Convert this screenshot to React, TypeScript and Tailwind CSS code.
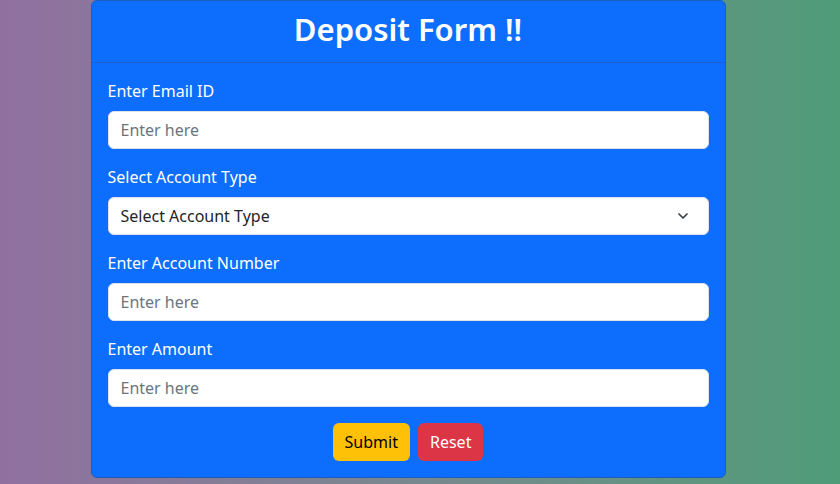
import { ChevronDown } from 'lucide-react';

const Field = ({ label }: { label: string }) => (
  <div className="mb-4">
    <label className="block mb-2 text-base leading-6 text-white">{label}</label>
    <input
      type="text"
      placeholder="Enter here"
      className="block w-full h-[38px] px-3 rounded-md border border-[#dee2e6] bg-white text-base text-[#212529] placeholder:text-[#6c757d] outline-none"
    />
  </div>
);

export default function App() {
  return (
    <div
      className="min-h-[484px] w-full bg-gradient-to-r from-[#9170a0] to-[#4e9c78] flex justify-center pr-6"
      style={{ fontFamily: '"Noto Sans", "Open Sans", sans-serif' }}
    >
      <div className="w-[635px] h-[478px] bg-[#0d6efd] border border-[#1f5cbf] rounded-md flex flex-col">
        <div className="h-[62px] border-b border-[#1a5fc9] flex items-center justify-center">
          <h1 className="text-[31px] font-semibold text-white leading-none -mt-1">Deposit Form !!</h1>
        </div>
        <form className="px-4 pt-4 pb-4" onSubmit={(e) => e.preventDefault()}>
          <Field label="Enter Email ID" />
          <div className="mb-4">
            <label className="block mb-2 text-base leading-6 text-white">Select Account Type</label>
            <div className="relative">
              <select className="block w-full h-[38px] pl-3 pr-10 rounded-md border border-[#dee2e6] bg-white text-base text-[#212529] appearance-none outline-none">
                <option>Select Account Type</option>
                <option>Savings</option>
                <option>Current</option>
              </select>
              <ChevronDown
                size={16}
                strokeWidth={2.5}
                className="absolute right-[18px] top-1/2 -translate-y-1/2 text-[#343a40] pointer-events-none"
              />
            </div>
          </div>
          <Field label="Enter Account Number" />
          <Field label="Enter Amount" />
          <div className="flex justify-center gap-2">
            <button
              type="submit"
              className="h-[38px] px-3 rounded-md bg-[#ffc107] text-base text-black"
            >
              Submit
            </button>
            <button
              type="reset"
              className="h-[38px] px-3 rounded-md bg-[#dc3545] text-base text-white"
            >
              Reset
            </button>
          </div>
        </form>
      </div>
    </div>
  );
}
